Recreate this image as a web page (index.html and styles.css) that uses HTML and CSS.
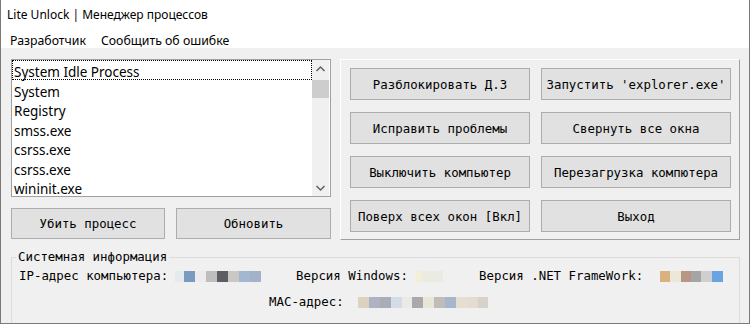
FILE: index.html
```html
<!DOCTYPE html>
<html>
<head>
    <title>Lite Unlock | Менеджер процессов</title>
    <link rel="stylesheet" href="styles.css">
</head>
<body>
    <div class="window">
        <div class="titlebar">Lite Unlock | Менеджер процессов</div>
        <div class="menubar">
            <span class="menu-item">Разработчик</span>
            <span class="menu-item">Сообщить об ошибке</span>
        </div>

        <div class="client">
            <div class="top">
                <div class="left">
                    <div class="listbox">
                        <ul class="items">
                            <li class="focused">System Idle Process</li>
                            <li>System</li>
                            <li>Registry</li>
                            <li>smss.exe</li>
                            <li>csrss.exe</li>
                            <li>csrss.exe</li>
                            <li>wininit.exe</li>
                        </ul>
                        <div class="scrollbar">
                            <svg class="arrow" width="17" height="17" viewBox="0 0 17 17">
                                <path d="M4.5 10 L8.5 6 L12.5 10" fill="none" stroke="#606060" stroke-width="1.5"/>
                            </svg>
                            <div class="track"><div class="thumb"></div></div>
                            <svg class="arrow" width="17" height="17" viewBox="0 0 17 17">
                                <path d="M4.5 7 L8.5 11 L12.5 7" fill="none" stroke="#606060" stroke-width="1.5"/>
                            </svg>
                        </div>
                    </div>
                    <div class="left-buttons">
                        <button class="btn kill">Убить процесс</button>
                        <button class="btn refresh">Обновить</button>
                    </div>
                </div>

                <div class="panel">
                    <button class="btn">Разблокировать Д.З</button>
                    <button class="btn">Запустить 'explorer.exe'</button>
                    <button class="btn">Исправить проблемы</button>
                    <button class="btn">Свернуть все окна</button>
                    <button class="btn">Выключить компьютер</button>
                    <button class="btn">Перезагрузка компютера</button>
                    <button class="btn">Поверх всех окон [Вкл]</button>
                    <button class="btn">Выход</button>
                </div>
            </div>

            <fieldset class="sysinfo">
                <legend>Системная информация</legend>
                <div class="info-row first">
                    <div class="cell cell-ip">
                        <span class="label">IP-адрес компьютера:</span>
                        <span class="mask mask-ip"></span>
                    </div>
                    <div class="cell cell-win">
                        <span class="label">Версия Windows:</span>
                        <span class="mask mask-win"></span>
                    </div>
                    <div class="cell cell-net">
                        <span class="label">Версия .NET FrameWork:</span>
                        <span class="mask mask-net"></span>
                    </div>
                </div>
                <div class="info-row second">
                    <div class="cell">
                        <span class="label">MAC-адрес:</span>
                        <span class="mask mask-mac"></span>
                    </div>
                </div>
            </fieldset>
        </div>
    </div>
</body>
</html>
```

FILE: styles.css
```css
body {
    margin: 0;
    background: #fff;
    font-family: "Noto Sans", "Open Sans", sans-serif;
    color: #000;
}
.window {
    width: 750px;
    height: 324px;
    box-sizing: border-box;
    border: 1px solid #7a7a7a;
    border-top: none;
    display: flex;
    flex-direction: column;
    overflow: hidden;
}
.titlebar {
    height: 30px;
    line-height: 30px;
    padding-left: 6px;
    font-size: 12px;
    background: #fff;
}
.menubar {
    height: 18px;
    box-sizing: border-box;
    padding: 2px 0 0 9px;
    display: flex;
    align-items: center;
    gap: 15px;
    font-size: 12.3px;
    background: #fff;
}
.client {
    flex: 1;
    background: #f0f0f0;
    padding: 11px 8px 0 10px;
}
.top {
    display: flex;
    gap: 9px;
}
.left {
    width: 320px;
    display: flex;
    flex-direction: column;
    gap: 11px;
}
.listbox {
    height: 138px;
    box-sizing: border-box;
    border: 1px solid #a0a0a0;
    background: #fff;
    display: flex;
    overflow: hidden;
}
.items {
    flex: 1;
    list-style: none;
    margin: 0;
    padding: 0;
    font-size: 13.5px;
}
.items li {
    height: 14.5px;
    padding: 5px 0 0 2px;
    line-height: 14.5px;
    white-space: nowrap;
}
.items li.focused {
    outline: 1px dotted #000;
    outline-offset: -1px;
}
.scrollbar {
    width: 17px;
    margin-right: 1px;
    background: #f0f0f0;
    display: flex;
    flex-direction: column;
}
.arrow {
    display: block;
    margin-top: 1px;
}
.track {
    flex: 1;
}
.thumb {
    height: 18px;
    margin-top: 2px;
    background: #cdcdcd;
}
.left-buttons {
    display: flex;
    gap: 11px;
}
.btn {
    box-sizing: border-box;
    height: 31px;
    border: 1px solid #adadad;
    background: #e1e1e1;
    color: #000;
    font-family: "DejaVu Sans Mono", "Liberation Mono", monospace;
    font-size: 12.4px;
    padding: 0;
    white-space: nowrap;
}
.kill {
    width: 154px;
}
.refresh {
    width: 155px;
}
.panel {
    width: 400px;
    height: 181px;
    box-sizing: border-box;
    border: 1px solid;
    border-color: #fff #a0a0a0 #a0a0a0 #fff;
    padding: 8px 8px 0 9px;
    display: grid;
    grid-template-columns: 180px 190px;
    grid-template-rows: repeat(4, 32px);
    column-gap: 11px;
    row-gap: 12px;
    align-content: start;
}
.panel .btn {
    height: 32px;
}
.sysinfo {
    margin: 10px 0 0;
    padding: 0;
    width: 729px;
    height: 80px;
    box-sizing: border-box;
    border: 1px solid #dcdcdc;
    font-family: "DejaVu Sans Mono", "Liberation Mono", monospace;
    font-size: 12.4px;
}
.sysinfo legend {
    margin-left: 4px;
    padding: 0 2px;
    line-height: 14px;
}
.info-row {
    display: flex;
    height: 16px;
    line-height: 16px;
    align-items: center;
}
.info-row.first {
    margin-top: 4px;
    padding-left: 7px;
}
.info-row.second {
    margin-top: 10px;
    padding-left: 257px;
}
.cell {
    display: flex;
    align-items: center;
}
.cell-ip {
    width: 277px;
}
.cell-win {
    width: 183px;
}
.mask {
    display: inline-block;
    height: 11px;
}
.mask-ip {
    margin-left: 7px;
    width: 86px;
    background: linear-gradient(to right,
        #e4eaee 0 9px, #7a9bbf 9px 20px, #ececec 20px 31px,
        #bebebe 31px 42px, #5e5e62 42px 53px, #c9c8c5 53px 64px,
        #a4b7d0 64px 75px, #a3b2c8 75px 86px);
}
.mask-win {
    margin-left: 8px;
    width: 27px;
    background: linear-gradient(to right, #f3efd6 0 6px, #ecebe3 6px 27px);
}
.mask-net {
    margin-left: 17px;
    width: 63px;
    background: linear-gradient(to right,
        #d9b27e 0 10px, #ebe7da 10px 21px, #b99681 21px 31px,
        #a5a5a5 31px 41px, #d0cece 41px 52px, #68a4e2 52px 63px);
}
.mask-mac {
    margin-left: 14px;
    width: 130px;
    background: linear-gradient(to right,
        #dcd2bd 0 11px, #aeb2c2 11px 22px, #a9adb8 22px 33px,
        #d2dde6 33px 44px, #ebebe6 44px 54px, #a9a9a9 54px 65px,
        #e8e6d6 65px 76px, #c0bcb8 76px 87px, #a8b6cc 87px 98px,
        #e6dfd0 98px 109px, #e4dcd0 109px 120px, #d8d2cc 120px 130px);
}
```
